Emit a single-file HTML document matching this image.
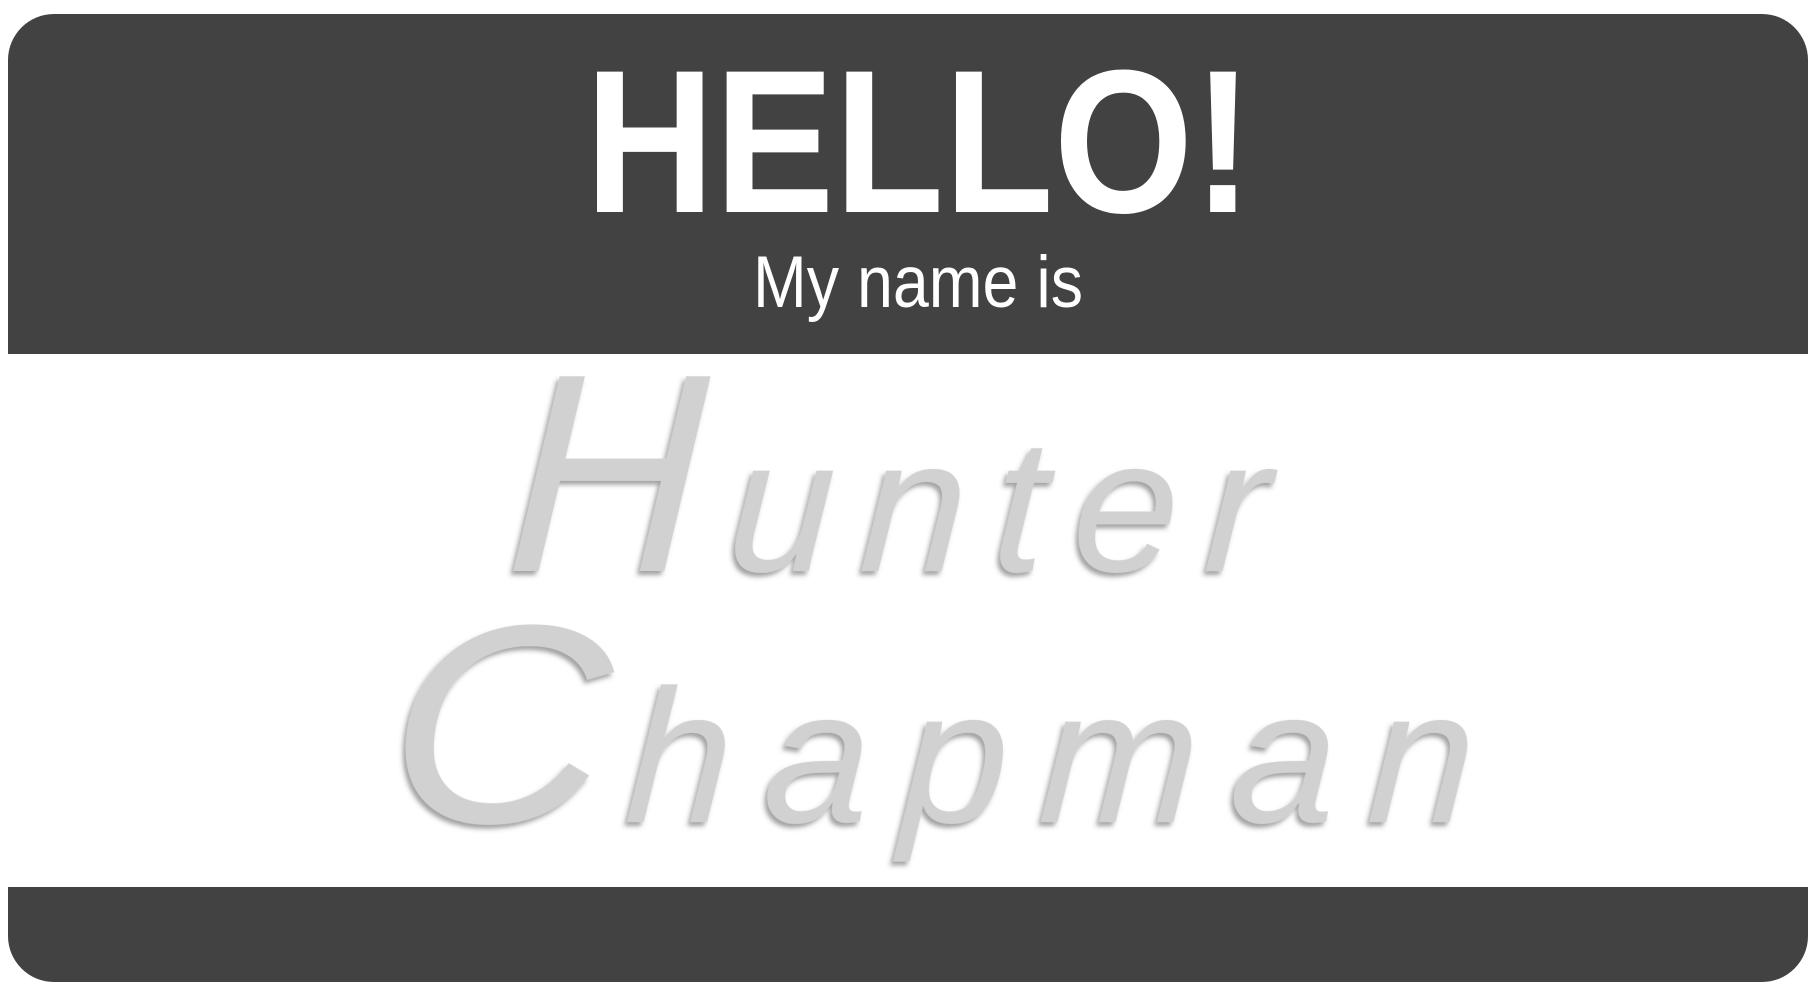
<!DOCTYPE html>
<html><head><meta charset="utf-8"><style>
html,body{margin:0;padding:0;width:1816px;height:1000px;background:#fff;overflow:hidden}
.card{position:absolute;left:8px;top:14px;width:1800px;height:968px;border-radius:46px;background:#424242;overflow:hidden}
.mid{position:absolute;left:0;top:340px;width:1800px;height:533px;background:#fff}
svg{position:absolute;left:0;top:0}
</style></head><body>
<div class="card"><div class="mid"></div></div>
<svg width="1816" height="1000" viewBox="0 0 1816 1000">
<defs><filter id="sh" x="-10%" y="-10%" width="120%" height="130%"><feDropShadow dx="-3" dy="4" stdDeviation="2.5" flood-color="#444" flood-opacity="0.5"/></filter></defs>
<text x="585" y="212" textLength="668" lengthAdjust="spacingAndGlyphs" font-family="Liberation Sans, sans-serif" font-weight="bold" font-size="204" fill="#fff">HELLO!</text>
<text x="753" y="307" textLength="330" lengthAdjust="spacingAndGlyphs" font-family="Liberation Sans, sans-serif" font-size="73" fill="#fff">My name is</text>
<g filter="url(#sh)" fill="#d2d1d2" font-family="Liberation Sans, sans-serif" font-style="italic">
<text x="505" y="571" font-size="283" textLength="195" lengthAdjust="spacingAndGlyphs" transform="skewX(-3) translate(30,0)">H</text>
<text x="726" y="571" font-size="190" textLength="540" lengthAdjust="spacing" transform="skewX(-3) translate(30,0)">unter</text>
<text x="385" y="822" font-size="283" textLength="220" lengthAdjust="spacingAndGlyphs" transform="skewX(-3) translate(43,0)">C</text>
<text x="624" y="822" font-size="190" textLength="848" lengthAdjust="spacing" transform="skewX(-3) translate(43,0)">hapman</text>
</g>
</svg>
</body></html>
